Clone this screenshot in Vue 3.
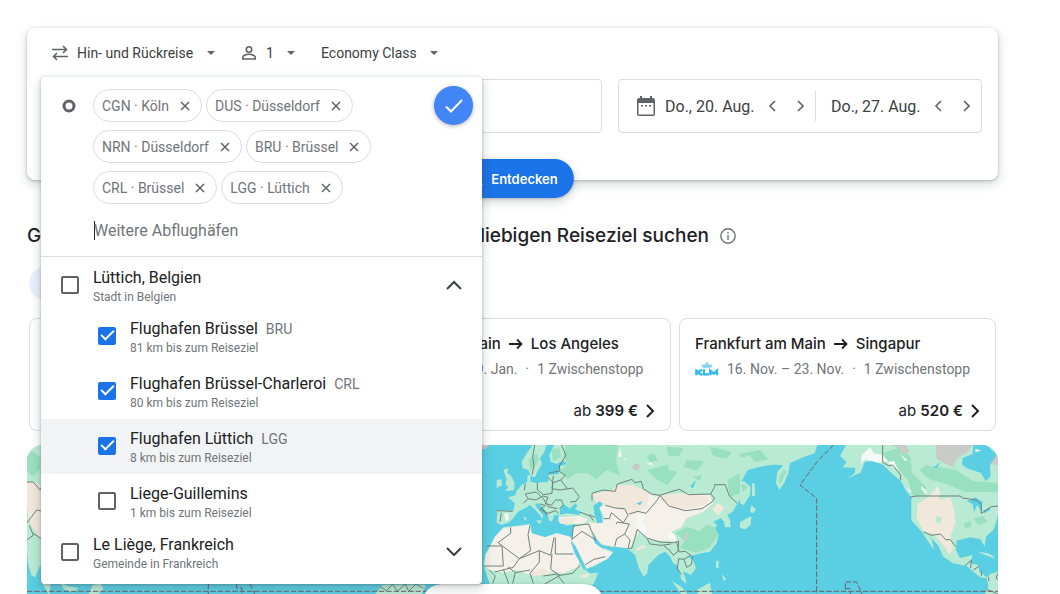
<script setup>
import { ref, reactive } from 'vue'

const chips = ref(['CGN · Köln', 'DUS · Düsseldorf', 'NRN · Düsseldorf', 'BRU · Brüssel', 'CRL · Brüssel', 'LGG · Lüttich'])
const places = reactive([
  { id: 'lgg-city', name: 'Lüttich, Belgien', sub: 'Stadt in Belgien', checked: false, parent: true, open: true },
  { id: 'bru', name: 'Flughafen Brüssel', code: 'BRU', sub: '81 km bis zum Reiseziel', checked: true },
  { id: 'crl', name: 'Flughafen Brüssel-Charleroi', code: 'CRL', sub: '80 km bis zum Reiseziel', checked: true },
  { id: 'lgg', name: 'Flughafen Lüttich', code: 'LGG', sub: '8 km bis zum Reiseziel', checked: true, active: true },
  { id: 'lieg', name: 'Liege-Guillemins', sub: '1 km bis zum Reiseziel', checked: false },
  { id: 'liege-fr', name: 'Le Liège, Frankreich', sub: 'Gemeinde in Frankreich', checked: false, parent: true, open: false },
])
const deals = [
  { to: 'Los Angeles', dates: '12. Jan. – 19. Jan.', price: '399 €' },
  { to: 'Singapur', dates: '16. Nov. – 23. Nov.', price: '520 €' },
]
const dates = ['Do., 20. Aug.', 'Do., 27. Aug.']
const extra = ref('')
const removeChip = (i) => chips.value.splice(i, 1)
</script>

<template>
  <main class="page">
    <form class="search" @submit.prevent>
      <div class="options">
        <label class="option">
          <svg class="icon swap" viewBox="0 0 18 16" width="18" height="16" aria-hidden="true"><path d="M1 4.500h14M12 1l3.500 3.500L12 8M17 11.500H3M6 8l-3.500 3.500L6 15" /></svg>
          <select class="select" aria-label="Reiseart"><option>Hin- und Rückreise</option></select>
          <svg class="caret" viewBox="0 0 8 4" width="8" height="4" aria-hidden="true"><path d="M0 0h8L4 4z" /></svg>
        </label>
        <label class="option">
          <svg class="icon person" viewBox="0 0 16 16" width="16" height="16" aria-hidden="true"><circle cx="8" cy="4.500" r="2.700" /><path d="M1.800 14v-1.600c0-2 3.800-3.100 6.200-3.100s6.200 1.100 6.200 3.100V14z" /></svg>
          <select class="select" aria-label="Reisende"><option>1</option></select>
          <svg class="caret" viewBox="0 0 8 4" width="8" height="4" aria-hidden="true"><path d="M0 0h8L4 4z" /></svg>
        </label>
        <label class="option">
          <select class="select" aria-label="Klasse"><option>Economy Class</option></select>
          <svg class="caret" viewBox="0 0 8 4" width="8" height="4" aria-hidden="true"><path d="M0 0h8L4 4z" /></svg>
        </label>
      </div>

      <div class="fields">
        <input class="where" type="text" aria-label="Reiseziel" />
        <div class="dates">
          <svg class="calendar" viewBox="0 0 18 20" width="18" height="20" aria-hidden="true"><path fill-rule="evenodd" d="M3 0h2v2h8V0h2v2h1a2 2 0 0 1 2 2v14a2 2 0 0 1-2 2H2a2 2 0 0 1-2-2V4a2 2 0 0 1 2-2h1zM1.500 7v11.500h15V7z" /><path d="M4 9h2v1.500H4zM8 9h2v1.500H8zM12 9h2v1.500h-2z" /></svg>
          <div v-for="d in dates" :key="d" class="date">
            <button type="button" class="date-value">{{ d }}</button>
            <button type="button" class="step" aria-label="Früher"><svg viewBox="0 0 8 12" width="8" height="12"><path d="M7 1 2 6l5 5" /></svg></button>
            <button type="button" class="step" aria-label="Später"><svg viewBox="0 0 8 12" width="8" height="12"><path d="m2 1 5 5-5 5" /></svg></button>
          </div>
        </div>
      </div>

      <button type="submit" class="explore">
        <svg viewBox="0 0 18 18" width="16" height="16" aria-hidden="true"><circle cx="7" cy="7" r="5" /><path d="m11 11 5 5" /></svg>
        Entdecken
      </button>

      <div class="picker">
        <div class="picker-head">
          <svg class="origin" viewBox="0 0 14 14" width="14" height="14" aria-hidden="true"><circle cx="7" cy="7" r="5" /></svg>
          <div class="entry">
            <ul class="chips">
              <li v-for="(c, i) in chips" :key="c" class="chip">
                {{ c }}
                <button type="button" class="remove" :aria-label="c + ' entfernen'" @click="removeChip(i)"><svg viewBox="0 0 10 10" width="10" height="10"><path d="m1 1 8 8M9 1 1 9" /></svg></button>
              </li>
            </ul>
            <div class="more">
              <span class="cursor"></span>
              <input v-model="extra" type="text" class="more-input" placeholder="Weitere Abflughäfen" aria-label="Weitere Abflughäfen" />
            </div>
          </div>
          <button type="button" class="done" aria-label="Fertig"><svg viewBox="0 0 18 14" width="18" height="14"><path d="m1 7.500 5 5L17 1" /></svg></button>
        </div>
        <ul class="places">
          <li v-for="p in places" :key="p.id" class="place" :class="{ parent: p.parent, active: p.active }">
            <input :id="p.id" v-model="p.checked" type="checkbox" class="check" />
            <label :for="p.id" class="place-text">
              <span class="name">{{ p.name }}<span v-if="p.code" class="code">{{ p.code }}</span></span>
              <span class="sub">{{ p.sub }}</span>
            </label>
            <button v-if="p.parent" type="button" class="toggle" :aria-expanded="p.open" aria-label="Flughäfen anzeigen">
              <svg viewBox="0 0 16 10" width="16" height="10"><path :d="p.open ? 'm1 9 7-7 7 7' : 'm1 1 7 7 7-7'" /></svg>
            </button>
          </li>
        </ul>
      </div>
    </form>

    <h2 class="title">
      <span class="title-text"><span>Günstige Flüge</span><span>zu einem beliebigen Reiseziel suchen</span></span>
      <svg viewBox="0 0 16 16" width="16" height="16" aria-hidden="true"><circle cx="8" cy="8" r="7.200" /><path d="M8 7v5M8 4v1.500" /></svg>
    </h2>

    <button type="button" class="city" aria-label="Abflugort"></button>

    <section class="deals">
      <div class="deal"></div>
      <a v-for="d in deals" :key="d.to" href="#" class="deal">
        <span class="route">Frankfurt am Main
          <svg class="arrow" viewBox="0 0 14 12" width="14" height="12" aria-hidden="true"><path d="M0 6h12.500M8 1.500 12.500 6 8 10.500" /></svg>
          {{ d.to }}</span>
        <span class="info">
          <svg class="klm" viewBox="0 0 72 42" width="24" height="14" aria-hidden="true">
            <path d="M24 17h24l5-10-9 3-4-6-4 4-4-4-4 6-9-3z" opacity=".65" /><circle cx="36" cy="3" r="3" opacity=".65" />
            <path class="mark" d="M4 22v18M21 23 7 31l15 8M27 22v15h15M46 40V26l10 9 10-9v14" />
          </svg>
          <span>{{ d.dates }}</span><span>·</span><span>1 Zwischenstopp</span>
        </span>
        <span class="price"><span>ab <b>{{ d.price }}</b></span>
          <svg viewBox="0 0 9 14" width="9" height="14" aria-hidden="true"><path d="m1 1 6 6-6 6" /></svg>
        </span>
      </a>
    </section>

    <section class="map">
      <svg class="world" viewBox="81 1335 2913 447" preserveAspectRatio="xMidYMin slice" aria-hidden="true">
        <g transform="translate(1440 1320)">
          <path d="M4 15h22l-8 12H4z" fill="#c8c8c4" />
          <!-- Europe and Asia -->
          <path class="land" d="M158 15 140 40 125 65 128 85 145 90 152 108 165 112 172 95 186 72 180 55 192 38 200 15zM222 15 208 45 212 65 228 72 250 62 262 72 240 78 236 102 205 105 205 125 165 128 152 125 150 104 142 107 142 125 125 135 110 152 106 166 84 172 104 190 100 212 52 210 50 248 66 255 88 247 100 235 114 215 135 205 150 195 166 210 182 228 186 238 190 226 172 205 165 192 175 190 190 205 204 225 206 240 216 245 222 226 236 224 235 245 260 257 285 252 284 272 272 294 285 325 318 388 345 378 385 355 400 335 375 325 358 326 342 308 325 275 342 290 365 315 400 322 425 320 440 325 465 345 475 380 490 410 502 400 505 375 535 345 555 335 570 350 580 370 590 375 598 395 605 420 620 432 615 410 608 395 620 398 632 405 648 385 640 362 625 350 650 343 690 335 710 310 716 285 705 265 712 255 700 245 722 235 732 245 735 262 752 262 750 240 742 225 758 215 780 178V15z" />
          <path class="land" d="M70 90l14-6-2 14 12 10 10 22-2 20-26 4 8-14-8-8 4-14zM50 120l14-2 2 18-16 8zM708 362h8v22h-8zM726 402l12 16-8 6zM576 424 604 440 622 462H604zM650 450 690 428 696 462H654zM130 230l10 4-4 10zM168 242l18-2-6 12z" />
          <!-- Africa -->
          <path class="land" d="M70 262 150 252 155 280 195 292 230 280 270 290 277 310 302 352 316 390 330 400 355 398 340 434H30L12 380 15 345 30 320 45 290z" />
          <path class="dark" d="M258 15H414L408 60 420 108 380 90 350 118 320 98 290 100 262 118 244 92 262 72 250 45zM168 38 178 58 164 78 150 92 146 60zM215 28l24-4 4 28-24 10zM500 90 562 74 566 90 592 96 562 136 530 118zM620 60 674 64 650 92 610 80zM690 20 756 36 740 56 700 48zM560 20 610 25 596 49 566 47zM584 280 622 260 658 274 680 254 706 262 712 288 690 322 650 338 600 325 615 300zM742 120 780 100 780 160 750 170zM500 48l20-8 14 20-24 8zM640 110l26-6-8 20z" />
          <path class="sand" d="M70 264 150 254 155 280 195 292 230 280 270 290 280 320 302 356 292 382 250 400 190 394 150 405 110 390 70 398 30 390 12 375 17 345 45 290zM280 262 324 252 345 310 370 328 398 338 380 358 320 385 290 325 276 300zM325 245 345 250 375 240 366 215 350 195 400 165 450 140 495 152 525 170 545 165 600 160 690 165 700 190 670 215 620 235 604 262 575 275 590 305 510 300 480 270 450 325 400 320 365 312 340 285zM236 232 300 228 324 238 310 252 240 250z" />
          <path class="beige" d="M334 162 394 152 412 136 458 134 508 160 500 200 456 222 420 212 392 198 350 190zM534 166 602 162 690 170 676 196 600 208 550 190zM236 236 290 232 280 248 244 252zM696 208 714 190 734 202 716 226zM450 300 480 310 500 322 470 332zM150 396 190 384 220 402 160 408zM290 408 330 400 320 414z" />
          <path class="land" d="M66 220 86 216 88 240 70 250zM470 285 496 300 486 315 464 330 450 325z" />
          <path class="water" d="M240 208 250 192 270 206 286 190 292 198 284 206 306 218 296 224 260 220 240 224zM340 198 358 184 370 192 358 204 366 228 368 248 352 250 344 226zM470 190 488 184 480 196zM630 140 648 120 640 144zM272 304 286 318 318 384 312 390 284 340z" />
          <path class="snow" d="M414 50 420 24 426 50zM430 60l8-6 2 6zM500 72l14-6 4 10zM470 232 486 218 494 230 486 250 500 264 494 286 480 278 468 256zM566 276 584 282 592 304 578 296 568 300zM72 222l14-2 0 18-8 6z" />
          <path fill="#c5ccc8" d="M454 84l12-14 14 6-6 18zM606 300l14-22 8 6-8 16z" />
          <path class="border" d="M164 15 158 50 162 78 156 104M244 15 258 45 238 78 240 92 205 100M204 112 220 128 242 120 256 106 238 94M216 145 220 108M242 120 262 146M133 150 136 130M172 126V150L190 164 216 160 218 130M216 146 240 150 278 144 298 170 288 184 270 186M130 190 144 176 168 180 188 168 204 172 196 190 214 196 226 180 244 180 250 194 238 206M144 176 136 162 168 156 190 176 204 200 232 206M180 192 196 196 180 208 204 220 226 212 236 220M188 206 200 224M64 218 60 246M50 212 98 214M92 262V280L54 308 118 356 152 332 144 284 150 256M118 356 178 332 212 346 222 292M20 318H66L70 378H12M118 356 100 382 44 396M178 332V366L150 400 160 430M216 342 212 388 240 406 278 400 300 376M226 292V342H280M190 408 230 402 252 430M240 406 194 432M84 380 106 398 98 430M70 388 86 430M28 390 46 408 38 430M106 398 150 390" />
          <path class="border" d="M336 182V160L368 150 406 154 412 132 456 118 464 128 484 124 490 146 514 162 540 166 576 154 598 148 626 164 692 162 704 140V134L736 134 748 168 772 190M540 166 566 198 616 212 666 206 696 186 704 174 692 162M376 196 406 204 434 206 444 226 430 248 394 218 388 236 372 236M448 222 474 214 498 220 532 180 540 166M408 252 412 246 448 252 434 282 410 296 404 320M434 282 450 300 444 326 456 324 472 268 500 294 540 306 580 308 596 304 594 334 580 346 570 332 552 318M502 298 510 312 544 316 572 312M590 308 598 336 616 334 638 350 634 374 620 382 612 358 596 356 592 386 604 404M612 358 632 346M300 216 330 228 340 242M328 224 344 232M280 258 306 254 326 252 334 272 348 296M280 258 276 298 306 274 350 302M316 374 342 358 376 350" />
        </g>
        <g transform="translate(2220 1320)">
          <!-- Eastern Siberia and Japan -->
          <path class="land" d="M0 15H232L224 40 190 52 150 70 145 100 132 130 118 150 108 130 112 95 130 76 100 74 60 80 24 90 0 130zM0 124l12 0 20 16-2 26-20 30-10-6zM36 130l8 0 2 36-10 4zM34 196l14 12-8 12-10-4zM0 246l34-18-2 26-16 14-16-4z" />
          <!-- North America -->
          <path class="land" d="M318 15 300 48 320 66 308 82 346 84 344 100 320 116 362 98 374 66 400 62 430 75 460 105 482 122 500 155 514 172V240L545 275 582 330 576 300 564 284 594 316 610 350 640 370 680 378 720 412 740 415 745 440 735 462H774V395L750 402 740 412 718 395 715 375 690 370 698 345 685 348 660 354 648 330 650 302 690 292 722 298 734 320 738 290 762 268 774 225V15zM718 336l26 4 20 10-6 3-38-14z" />
          <path class="dark" d="M430 38 482 22 512 52 516 98 560 142 552 166 518 170 504 120 464 76 436 60zM538 90 558 76 648 90 698 124 774 128V156L674 156 620 132 568 118zM0 42 60 30 86 58 46 66 28 46 0 54zM2 132l22 6-14 18zM700 236l28-8 14 18-26 10zM670 250l22-6 4 14-20 8zM130 90l10 4-20 40-4-20z" />
          <path class="beige" d="M532 192 566 170 588 144 602 156 596 178 632 174 642 210 646 250 634 280 632 300 640 325 630 345 606 310 580 282 550 272 530 235z" />
          <path fill="#c9cbc7" d="M450 15h46l14 20-22 8-14-20zM588 15h110l-18 24-26 12-16 30-48-24-2-20zM748 50l26-8v32h-24z" />
          <path class="water" d="M668 54 698 42 700 15H740L770 45 750 75 752 108 738 124 722 98 684 86 666 74zM680 184 706 172 728 186 722 212 712 194 702 216 698 192zM730 212l22-10-2 8-18 10zM580 84l20-18-8 18z" />
          <path class="snow" d="M364 46 390 22 402 40 428 44 446 66 462 62 476 92 462 84 440 64 412 68 376 58 364 72zM544 138l18 18-4 6-14-14zM480 42l22 18-6 4zM502 144l12 8-4 6zM590 138l6 8-6 14zM706 26l18 6-18 4z" />
          <path class="land" d="M590 226l16 8-6 18-14-6z" />
          <path class="border" d="M428 15V67L446 77 458 75 482 105V120M510 172 528 168H660L668 174 708 180 724 192V220L754 200 774 198M550 276 574 286 602 282 618 300 630 298 648 320M674 378 694 360 692 384M700 390 718 378M724 392V408M746 410V424M774 400l-6 14 6 6M740 448l34 14" />
          <path class="zone" d="M280 15 230 67 180 135 230 175V462M316 446V426H350L366 462M316 446H331V462" />
        </g>
        <g transform="translate(60 1200)">
          <path class="land" d="M20 135H80V485L58 500 46 532 34 526 24 490 20 440z" />
          <path class="beige" d="M20 250 44 244 70 264V420L52 406 28 366 20 312z" />
          <path class="dark" d="M20 170 36 154 62 172V208L38 228 20 214z" />
          <path class="border" d="M20 246H40L60 270 70 250M20 370 50 330 70 334M20 420 40 406 28 376M40 400 70 420" />
          <path class="land" d="M62 500 78 524 92 550 88 586 66 550zM116 540 142 558 176 564 162 578 132 568zM206 582 218 554 242 548 250 568 236 582z" />
          <path class="zone" d="M565 552V582M650 552V564H666V582M690 552 704 582" />
        </g>
        <g transform="translate(900 1320)">
          <path class="land" d="M226 462 248 434H378L366 462z" />
          <path class="border" d="M240 440 260 452 278 432 292 454 316 432 326 454 348 432 370 446" />
        </g>
        <path class="zone" d="M81 1774H2994" />
      </svg>
      <button type="button" class="map-button" aria-label="Karte öffnen"></button>
    </section>
  </main>
</template>

<style scoped>
.page {
  display: flex;
  flex-direction: column;
  height: 100vh;
  box-sizing: border-box;
  padding: 28px 62px 0 27px;
  overflow: hidden;
  background: #fff;
  color: #202124;
  font-family: Roboto, "Liberation Sans", sans-serif;
  font-size: 14px;
}
button, input, select { font: inherit; color: inherit; }
button { padding: 0; border: 0; background: none; cursor: pointer; }
ul { margin: 0; padding: 0; list-style: none; }
svg { flex: none; fill: none; stroke: currentColor; }

.search {
  position: relative;
  z-index: 2;
  flex: none;
  box-sizing: border-box;
  height: 152px;
  padding: 11px 16px 0 24px;
  border-radius: 8px;
  background: #fff;
  box-shadow: 0 1px 3px rgba(60, 64, 67, .3), 0 4px 8px 2px rgba(60, 64, 67, .15);
}
.options { display: flex; gap: 26px; height: 27px; color: #3c4043; }
.option { display: flex; align-items: center; }
.select { appearance: none; padding: 0; border: 0; background: none; outline: 0; }
.icon { margin-right: 8px; color: #5f6368; stroke-width: 1.600; }
.person { margin-right: 9px; }
.caret { margin-left: 13px; fill: #5f6368; stroke: none; }

.fields { display: flex; gap: 16px; height: 54px; margin-top: 13px; }
.where { flex: 1; min-width: 0; box-sizing: border-box; border: 1px solid #dadce0; border-radius: 4px; background: #fff; }
.dates {
  display: flex;
  align-items: center;
  box-sizing: border-box;
  width: 364px;
  padding-left: 18px;
  border: 1px solid #dadce0;
  border-radius: 4px;
  color: #3c4043;
  font-size: 16px;
}
.calendar { fill: #5f6368; stroke: none; }
.date { display: flex; align-items: center; height: 30px; padding-left: 10px; }
.date + .date { margin-left: 1px; padding-left: 15px; border-left: 1px solid #dadce0; }
.date-value { width: 90px; text-align: left; white-space: nowrap; }
.step { display: grid; place-items: center; width: 28px; height: 28px; color: #5f6368; }
.step:nth-child(2) { margin-left: 3px; }
.step svg { stroke-width: 1.600; }

.explore {
  position: absolute;
  left: 50%;
  bottom: -18px;
  display: flex;
  align-items: center;
  gap: 8px;
  height: 39px;
  padding: 0 16px;
  border-radius: 20px;
  background: #1a73e8;
  color: #fff;
  font: 600 13px Inter, sans-serif;
  transform: translateX(-50%);
  box-shadow: 0 1px 3px rgba(60, 64, 67, .3), 0 4px 8px 2px rgba(60, 64, 67, .15);
}
.explore svg { stroke-width: 2; }

.picker {
  position: absolute;
  top: 49px;
  left: 14px;
  width: 441px;
  padding-bottom: 8px;
  box-sizing: border-box;
  border-radius: 4px;
  background: #fff;
  box-shadow: 0 1px 3px rgba(60, 64, 67, .35), 0 4px 8px 3px rgba(60, 64, 67, .15);
}
.picker-head { display: flex; align-items: flex-start; padding: 12px 9px 0 21px; border-bottom: 1px solid #dadce0; }
.origin { margin-top: 10px; stroke: #5f6368; stroke-width: 3; }
.entry { flex: 1; padding-left: 17px; }
.chips { display: flex; flex-wrap: wrap; gap: 8px 4px; }
.chip {
  display: flex;
  align-items: center;
  box-sizing: border-box;
  height: 33px;
  padding: 0 5px 0 8px;
  border: 1px solid #dadce0;
  border-radius: 17px;
  color: #70757a;
}
.remove { display: grid; place-items: center; width: 22px; height: 22px; margin-left: 5px; color: #5f6368; }
.remove svg { stroke-width: 1.500; }
.more { display: flex; align-items: center; height: 52px; }
.cursor { width: 1px; height: 19px; margin: 0 -1px 0 1px; background: #202124; }
.more-input { flex: 1; min-width: 0; padding: 0; border: 0; outline: 0; background: none; font-size: 16px; }
.more-input::placeholder { color: #70757a; opacity: 1; }
.done {
  display: grid;
  place-items: center;
  width: 39px;
  height: 39px;
  margin-top: -3px;
  border-radius: 50%;
  background: #4285f4;
  color: #fff;
  box-shadow: 0 1px 4px rgba(60, 64, 67, .4);
}
.done svg { stroke-width: 2; }

.places { padding-top: 5px; }
.place { display: flex; align-items: center; height: 55px; padding: 0 20px 0 57px; }
.place.parent { height: 47px; padding-left: 20px; }
.place.active { background: #f1f3f4; }
.check {
  flex: none;
  display: grid;
  place-items: center;
  appearance: none;
  width: 18px;
  height: 18px;
  margin: 0 0 2px;
  border: 2px solid #5f6368;
  border-radius: 2px;
}
.check:checked { border-color: #1a73e8; background: #1a73e8; }
.check:checked::before {
  content: "";
  width: 13px;
  height: 7px;
  border: solid #fff;
  border-width: 0 0 2px 2px;
  box-sizing: border-box;
  transform: translateY(-2px) rotate(-45deg);
}
.place-text { flex: 1; padding: 3px 0 0 14px; }
.name, .sub { display: block; white-space: nowrap; }
.name { font-size: 16px; line-height: 20px; }
.code { margin-left: 8px; color: #70757a; font-size: 14px; }
.sub { color: #70757a; font-size: 12px; line-height: 18px; }
.toggle { display: grid; place-items: center; width: 16px; height: 24px; margin-bottom: 2px; color: #3c4043; }
.toggle svg { stroke-width: 2; }

.title { display: flex; flex: none; align-items: center; gap: 11px; height: 26px; margin: 43px 0 0; font: 500 19px/26px Inter, sans-serif; }
.title-text { display: flex; justify-content: space-between; width: 682px; white-space: nowrap; }
.title svg { color: #70757a; stroke-width: 1.400; }
.city { flex: none; align-self: flex-start; width: 160px; height: 33px; margin: 18px 0 0 2px; border-radius: 17px; background: #e8f0fe; }

.deals { display: grid; flex: none; grid-template-columns: repeat(3, 1fr); gap: 8px; margin: 18px 2px 0; }
.deal {
  display: flex;
  flex-direction: column;
  box-sizing: border-box;
  height: 113px;
  padding: 14px 15px 0;
  border: 1px solid #dadce0;
  border-radius: 8px;
  color: #202124;
  text-decoration: none;
}
.route { display: flex; align-items: center; gap: 8px; font: 500 15px/22px Inter, sans-serif; white-space: nowrap; }
.arrow { stroke-width: 1.800; }
.info { display: flex; align-items: center; gap: 8px; margin-top: 4px; color: #70757a; line-height: 20px; white-space: nowrap; }
.klm { fill: #34b8ec; stroke: none; }
.mark { fill: none; stroke: #34b8ec; stroke-width: 7; }
.price { display: flex; align-items: center; justify-content: flex-end; gap: 8px; margin-top: 21px; font: 400 15px/22px Inter, sans-serif; }
.price b { font-weight: 600; }
.price svg { stroke-width: 2; }

.map { position: relative; flex: 1; min-height: 0; margin-top: 14px; overflow: hidden; border-radius: 16px 16px 0 0; background: #5acee3; }
.world { display: block; width: 100%; height: 100%; stroke: none; }
.land { fill: #b8ead4; }
.dark { fill: #98e0bf; }
.sand { fill: #f5f0e9; }
.beige { fill: #f1e7da; }
.water { fill: #5acee3; }
.snow { fill: #f4f8f7; }
.border { fill: none; stroke: #71827c; stroke-width: 3; stroke-linejoin: round; }
.zone { fill: none; stroke: #725f68; stroke-width: 3; stroke-dasharray: 16 6; }
.map-button {
  position: absolute;
  bottom: -30px;
  left: 50%;
  width: 182px;
  height: 40px;
  border-radius: 20px;
  background: #fff;
  transform: translateX(-50%);
  box-shadow: 0 1px 4px rgba(60, 64, 67, .3);
}
</style>

<style>
body { margin: 0; }
</style>
